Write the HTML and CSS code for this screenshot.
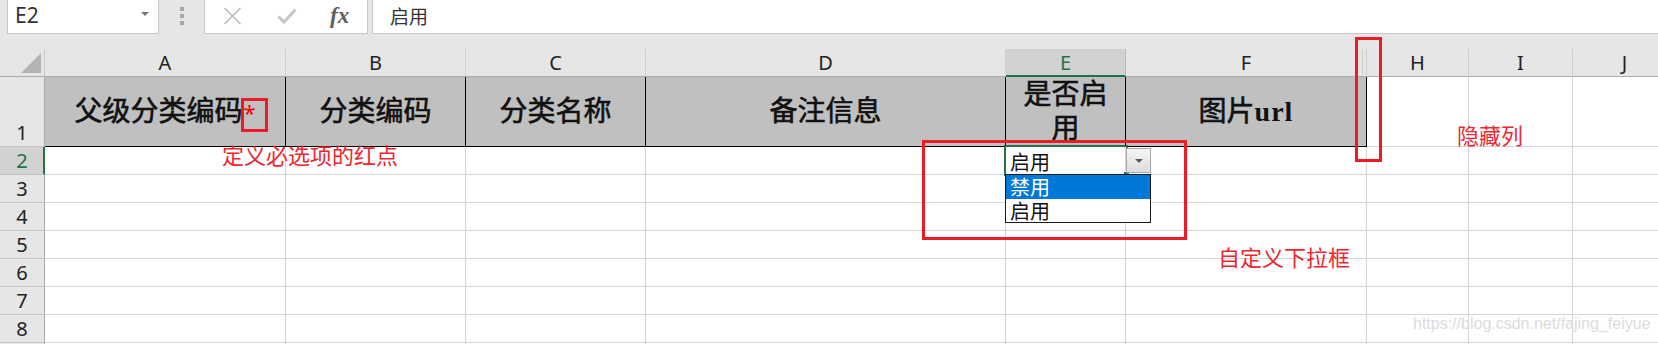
FILE: index.html
```html
<!DOCTYPE html>
<html lang="zh">
<head>
<meta charset="utf-8">
<title>Excel 下拉框示例</title>
<link rel="stylesheet" href="styles.css">
</head>
<body>
<div class="app">
  <div class="topbar">
    <div class="namebox"><span class="ref">E2</span><span class="caret"></span></div>
    <div class="grip"><i></i><i></i><i></i></div>
    <div class="fbtns">
      <svg class="ico-x" viewBox="0 0 19 18"><path d="M1.5 1L17.5 17M17.5 1L1.5 17"/></svg>
      <svg class="ico-ok" viewBox="0 0 20 18"><path d="M1.5 9.5L7 15L18.5 2.5"/></svg>
      <span class="fx">fx</span>
    </div>
    <div class="finput">启用</div>
  </div>

  <div class="grid">
    <div class="corner"><span class="tri"></span></div>
    <div class="ch">A</div>
    <div class="ch">B</div>
    <div class="ch">C</div>
    <div class="ch">D</div>
    <div class="ch sel">E</div>
    <div class="ch hid">F</div>
    <div class="ch">H</div>
    <div class="ch">I</div>
    <div class="ch">J</div>

    <div class="rh">1</div>
    <div class="hc">父级分类编码<span class="req">*</span></div>
    <div class="hc">分类编码</div>
    <div class="hc">分类名称</div>
    <div class="hc">备注信息</div>
    <div class="hc wrap">是否启用</div>
    <div class="hc">图片<span class="lat">url</span></div>
    <div class="c"></div><div class="c"></div><div class="c"></div>

    <div class="rh sel">2</div>
    <div class="c"></div><div class="c"></div><div class="c"></div><div class="c"></div>
    <div class="c val">启用</div>
    <div class="c"></div><div class="c"></div><div class="c"></div><div class="c"></div>

    <div class="rh">3</div>
    <div class="c"></div><div class="c"></div><div class="c"></div><div class="c"></div><div class="c"></div><div class="c"></div><div class="c"></div><div class="c"></div><div class="c"></div>
    <div class="rh">4</div>
    <div class="c"></div><div class="c"></div><div class="c"></div><div class="c"></div><div class="c"></div><div class="c"></div><div class="c"></div><div class="c"></div><div class="c"></div>
    <div class="rh">5</div>
    <div class="c"></div><div class="c"></div><div class="c"></div><div class="c"></div><div class="c"></div><div class="c"></div><div class="c"></div><div class="c"></div><div class="c"></div>
    <div class="rh">6</div>
    <div class="c"></div><div class="c"></div><div class="c"></div><div class="c"></div><div class="c"></div><div class="c"></div><div class="c"></div><div class="c"></div><div class="c"></div>
    <div class="rh">7</div>
    <div class="c"></div><div class="c"></div><div class="c"></div><div class="c"></div><div class="c"></div><div class="c"></div><div class="c"></div><div class="c"></div><div class="c"></div>
    <div class="rh">8</div>
    <div class="c"></div><div class="c"></div><div class="c"></div><div class="c"></div><div class="c"></div><div class="c"></div><div class="c"></div><div class="c"></div><div class="c"></div>
    <div class="rh"></div>
    <div class="c"></div><div class="c"></div><div class="c"></div><div class="c"></div><div class="c"></div><div class="c"></div><div class="c"></div><div class="c"></div><div class="c"></div>
  </div>

  <!-- selection, fill handle and data-validation dropdown -->
  <div class="selbox"></div>
  <div class="fillhandle"></div>
  <div class="ddbtn"><span class="ddtri"></span></div>
  <ul class="ddlist">
    <li class="on">禁用</li>
    <li>启用</li>
  </ul>

  <!-- annotations -->
  <div class="mark mark-req"></div>
  <div class="mark mark-hid"></div>
  <div class="mark mark-dd"></div>
  <div class="note note-req">定义必选项的红点</div>
  <div class="note note-hid">隐藏列</div>
  <div class="note note-dd">自定义下拉框</div>

  <div class="wm">https://blog.csdn.net/fajing_feiyue</div>
</div>
</body>
</html>
```

FILE: styles.css
```css
* { box-sizing: border-box; margin: 0; padding: 0; }

html, body {
  width: 1658px;
  height: 344px;
  overflow: hidden;
  background: #e6e6e6;
}

body {
  font-family: "Noto Sans", "Noto Sans CJK SC", sans-serif;
  color: #222;
}

.app {
  position: relative;
  width: 1658px;
  height: 344px;
  overflow: hidden;
}

/* ---------- formula bar ---------- */
.topbar {
  display: flex;
  height: 34px;
  margin-bottom: 15px;
  padding-left: 7px;
}

.namebox {
  width: 152px;
  background: #fff;
  border: 1px solid #c6c6c6;
  border-top: 0;
  display: flex;
  align-items: center;
  justify-content: space-between;
  padding: 0 9px 2px 7px;
}

.ref {
  font-size: 21px;
  line-height: 1;
  color: #333;
}

.caret {
  width: 0;
  height: 0;
  border-left: 4px solid transparent;
  border-right: 4px solid transparent;
  border-top: 4px solid #777;
  margin-top: -3px;
}

.grip {
  width: 45px;
  display: flex;
  flex-direction: column;
  align-items: center;
  gap: 3px;
  padding-top: 7px;
}

.grip i {
  display: block;
  width: 4px;
  height: 4px;
  background: #a8a8a8;
}

.fbtns {
  width: 164px;
  background: #fff;
  border: 1px solid #c6c6c6;
  border-top: 0;
  display: flex;
  align-items: center;
  padding: 0 0 2px 18px;
}

.ico-x {
  width: 19px;
  height: 18px;
  fill: none;
  stroke: #bcbcbc;
  stroke-width: 1.6;
}

.ico-ok {
  width: 20px;
  height: 18px;
  margin-left: 35px;
  fill: none;
  stroke: #c6c6c6;
  stroke-width: 3;
}

.fx {
  margin-left: 33px;
  font-family: "Liberation Serif", serif;
  font-style: italic;
  font-weight: 700;
  font-size: 23px;
  line-height: 1;
  color: #606060;
}

.finput {
  flex: 1;
  margin-left: 4px;
  background: #fff;
  border: 1px solid #c6c6c6;
  border-top: 0;
  border-right: 0;
  padding: 0 0 2px 17px;
  display: flex;
  align-items: center;
  font-family: "Noto Sans CJK SC", sans-serif;
  font-size: 19px;
  color: #333;
}

/* ---------- sheet grid ---------- */
.grid {
  display: grid;
  grid-template-columns: 45px 241px 180px 180px 360px 120px 241px 102px 104px 104px;
  grid-template-rows: 28px 70px repeat(8, 28px);
  background: #fff;
}

.corner {
  background: #e6e6e6;
  border-right: 1px solid #c8c8c8;
  border-bottom: 1px solid #ababab;
  display: flex;
  align-items: flex-end;
  justify-content: flex-end;
  padding: 0 3px 3px 0;
}

.tri {
  width: 0;
  height: 0;
  border-left: 20px solid transparent;
  border-bottom: 20px solid #b4b4b4;
}

.ch {
  background: #e6e6e6;
  border-right: 1px solid #cfcfcf;
  border-bottom: 1px solid #ababab;
  display: flex;
  align-items: center;
  justify-content: center;
  font-size: 20px;
  line-height: 1;
  color: #222;
  padding-top: 1px;
}

.ch.sel {
  background: #d2d2d2;
  color: #217346;
  border-bottom: 2px solid #217346;
  border-right-color: #bdbdbd;
  padding-top: 2px;
}

.ch.hid {
  position: relative;
}

.ch.hid::after {
  content: "";
  position: absolute;
  right: 3px;
  top: 0;
  bottom: 0;
  width: 1px;
  background: #cfcfcf;
}

.rh {
  background: #e6e6e6;
  border-right: 1px solid #ababab;
  border-bottom: 1px solid #c4c4c4;
  display: flex;
  align-items: flex-end;
  justify-content: center;
  font-size: 20px;
  line-height: 24px;
  color: #222;
  padding-bottom: 1px;
}

.rh.sel {
  background: #d2d2d2;
  color: #217346;
  border-right: 2px solid #217346;
  padding-left: 1px;
}

.hc {
  background: #c0c0c0;
  border-right: 1px solid #000;
  border-bottom: 1px solid #000;
  display: flex;
  align-items: center;
  justify-content: center;
  text-align: center;
  font-family: "Liberation Serif", "Noto Sans CJK SC", serif;
  font-size: 28px;
  font-weight: 400;
  -webkit-text-stroke: 0.6px #111;
  line-height: 34px;
  color: #111;
  overflow: hidden;
}

.hc.wrap {
  padding: 0 8px;
}

.hc .lat {
  font-weight: 700;
  letter-spacing: 1px;
  -webkit-text-stroke: 0;
}

.req {
  font-family: "Noto Sans", sans-serif;
  font-size: 22px;
  font-weight: 400;
  -webkit-text-stroke: 0;
  color: #ff0000;
  margin-left: 1px;
}

.c {
  background: #fff;
  border-right: 1px solid #d4d4d4;
  border-bottom: 1px solid #d4d4d4;
}

.c.val {
  display: flex;
  align-items: center;
  padding: 3px 0 0 4px;
  font-family: "Noto Sans CJK SC", sans-serif;
  font-size: 20px;
  line-height: 1;
  color: #111;
}

/* ---------- selection and dropdown (overlays) ---------- */
.selbox {
  position: absolute;
  left: 1004px;
  top: 145px;
  width: 124px;
  height: 31px;
  border: 2px solid #217346;
}

.fillhandle {
  position: absolute;
  left: 1123px;
  top: 171px;
  width: 7px;
  height: 7px;
  background: #217346;
  border: 1px solid #fff;
}

.ddbtn {
  position: absolute;
  left: 1126px;
  top: 148px;
  width: 25px;
  height: 25px;
  border: 1px solid #a9a9a9;
  background: linear-gradient(#f6f6f6, #dcdcdc);
  display: flex;
  align-items: center;
  justify-content: center;
}

.ddtri {
  width: 0;
  height: 0;
  border-left: 4px solid transparent;
  border-right: 4px solid transparent;
  border-top: 4px solid #5a5a5a;
}

.ddlist {
  position: absolute;
  left: 1005px;
  top: 174px;
  width: 146px;
  height: 49px;
  list-style: none;
  background: #fff;
  border: 1px solid #1a1a1a;
}

.ddlist li {
  height: 24px;
  padding-left: 4px;
  display: flex;
  align-items: center;
  font-family: "Noto Sans CJK SC", sans-serif;
  font-size: 20px;
  line-height: 1;
  color: #111;
}

.ddlist li.on {
  background: #0078d7;
  color: #fff;
}

/* ---------- annotations ---------- */
.mark {
  position: absolute;
  border: 3px solid #ed1c24;
}

.mark-req { left: 241px; top: 98px; width: 27px; height: 34px; }
.mark-hid { left: 1355px; top: 37px; width: 27px; height: 125px; }
.mark-dd  { left: 922px; top: 140px; width: 265px; height: 100px; }

.note {
  position: absolute;
  font-family: "Noto Sans CJK SC", sans-serif;
  font-size: 22px;
  line-height: 22px;
  color: #ed2730;
  white-space: nowrap;
}

.note-req { left: 222px; top: 143px; }
.note-hid { left: 1457px; top: 123px; }
.note-dd  { left: 1218px; top: 245px; }

.wm {
  position: absolute;
  left: 1413px;
  top: 316px;
  font-family: "Liberation Sans", sans-serif;
  font-size: 16px;
  line-height: 16px;
  color: #dcdcdc;
  white-space: nowrap;
}
```
